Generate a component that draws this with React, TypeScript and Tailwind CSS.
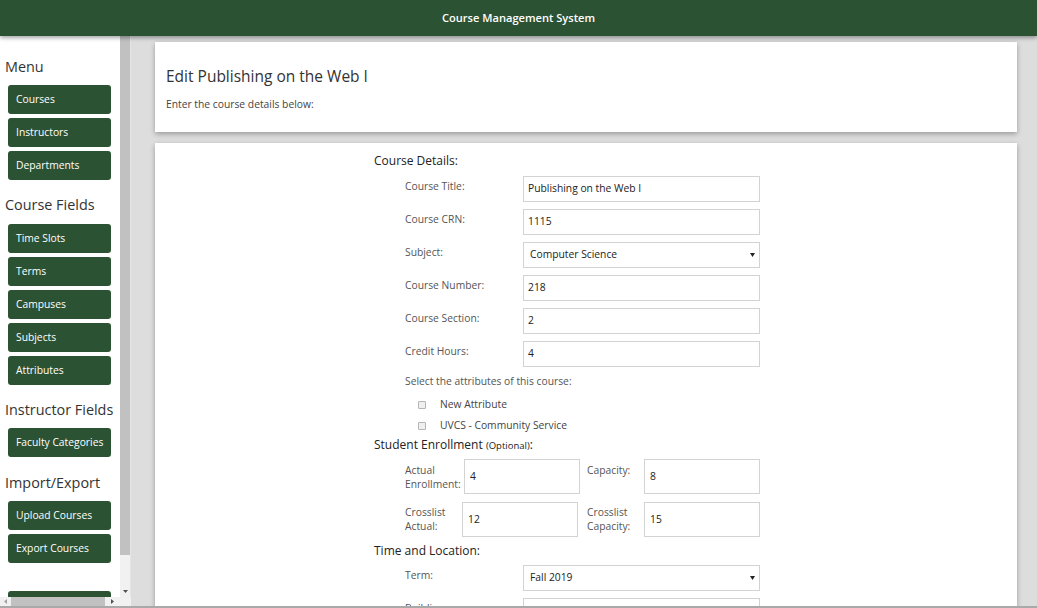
import React from "react";

const GREEN = "bg-[#2c5234]";

function SideButton({ children }: { children?: React.ReactNode }) {
  return (
    <div className={`ml-[8px] w-[103px] h-[29px] ${GREEN} rounded-[3px] text-white text-[10.3px] pl-[8px] flex items-center shrink-0`}>
      {children}
    </div>
  );
}

function SideHeading({ children, className = "" }: { children: React.ReactNode; className?: string }) {
  return (
    <div className={`pl-[5px] h-[20px] leading-[20px] text-[14.4px] text-[#333] whitespace-nowrap shrink-0 ${className}`}>
      {children}
    </div>
  );
}

function Field({ label, value, select = false, className = "" }: { label: string; value: string; select?: boolean; className?: string }) {
  return (
    <div className={`flex items-start pl-[31px] ${className}`}>
      <div className="w-[118px] pt-[3px] leading-[14px] text-[10.3px] text-[#555]">{label}</div>
      <div
        className={`w-[237px] h-[26px] border border-[#d3d3d3] bg-white flex items-center text-[10.3px] text-[#222] ${
          select ? "pl-[6px] pr-[4px] justify-between" : "pl-[4px]"
        }`}
      >
        <span>{value}</span>
        {select && (
          <svg width="5" height="4" viewBox="0 0 5 4">
            <path d="M0 0 L5 0 L2.5 4 Z" fill="#222" />
          </svg>
        )}
      </div>
    </div>
  );
}

function Check({ label, className = "" }: { label: string; className?: string }) {
  return (
    <div className={`flex items-center h-[16px] pl-[44px] ${className}`}>
      <div className="w-[8px] h-[8px] rounded-[1px] border border-[#b5b5b5] bg-[#efefef]" />
      <div className="ml-[14px] text-[10.3px] text-[#444]">{label}</div>
    </div>
  );
}

function SmallField({
  label,
  value,
  labelW,
  pt,
}: {
  label: React.ReactNode;
  value: string;
  labelW: string;
  pt: string;
}) {
  return (
    <div className="flex items-start">
      <div className={`${labelW} ${pt} leading-[14px] text-[10.3px] text-[#555]`}>{label}</div>
      <div className="w-[116px] h-[35px] border border-[#d3d3d3] bg-white flex items-center pl-[5px] text-[10.3px] text-[#222]">
        {value}
      </div>
    </div>
  );
}

export default function App() {
  return (
    <div
      className="w-[1037px] h-[608px] overflow-hidden flex flex-col bg-[#dddddd]"
      style={{ fontFamily: "'Open Sans', 'Noto Sans', sans-serif" }}
    >
      {/* Header */}
      <div className={`h-[36px] shrink-0 ${GREEN} flex items-center justify-center relative z-10 shadow-[0_2px_4px_rgba(0,0,0,0.35)]`}>
        <span className="text-white text-[11.1px] font-semibold">Course Management System</span>
      </div>

      <div className="flex-1 min-h-0 flex">
        {/* Sidebar */}
        <div className="w-[131px] shrink-0 flex flex-col relative z-[5]">
          <div className="flex-1 min-h-0 flex">
            <div className="w-[120px] bg-white overflow-hidden flex flex-col pt-[21px]">
              <SideHeading className="mb-[8px]">Menu</SideHeading>
              <div className="flex flex-col gap-[4px]">
                <SideButton>Courses</SideButton>
                <SideButton>Instructors</SideButton>
                <SideButton>Departments</SideButton>
              </div>
              <SideHeading className="mt-[15px] mb-[9px]">Course Fields</SideHeading>
              <div className="flex flex-col gap-[4px]">
                <SideButton>Time Slots</SideButton>
                <SideButton>Terms</SideButton>
                <SideButton>Campuses</SideButton>
                <SideButton>Subjects</SideButton>
                <SideButton>Attributes</SideButton>
              </div>
              <SideHeading className="mt-[15px] mb-[8px]">Instructor Fields</SideHeading>
              <SideButton>Faculty Categories</SideButton>
              <SideHeading className="mt-[16px] mb-[8px]">Import/Export</SideHeading>
              <div className="flex flex-col gap-[4px]">
                <SideButton>Upload Courses</SideButton>
                <SideButton>Export Courses</SideButton>
              </div>
              <div className="mt-[28px]">
                <SideButton />
              </div>
            </div>
            {/* vertical scrollbar */}
            <div className="w-[11px] bg-[#f1f1f1] flex flex-col border-r border-r-[#e4e4e4]">
              <div className="h-[519px] bg-[#c1c1c1] shrink-0" />
              <div className="flex-1" />
              <div className="h-[12px] flex items-center justify-center">
                <svg width="5" height="3" viewBox="0 0 5 3">
                  <path d="M0 0 L5 0 L2.5 3 Z" fill="#505050" />
                </svg>
              </div>
            </div>
          </div>
          {/* horizontal scrollbar */}
          <div className="h-[9px] flex bg-[#f1f1f1] shrink-0">
            <div className="w-[11px] flex items-center justify-center">
              <svg width="3" height="5" viewBox="0 0 3 5">
                <path d="M3 0 L3 5 L0 2.5 Z" fill="#a3a3a3" />
              </svg>
            </div>
            <div className="w-[94px] bg-[#c1c1c1]" />
            <div className="w-[15px] flex items-center justify-center">
              <svg width="3" height="5" viewBox="0 0 3 5">
                <path d="M0 0 L0 5 L3 2.5 Z" fill="#505050" />
              </svg>
            </div>
            <div className="w-[11px] bg-[#f1f1f1]" />
          </div>
        </div>

        {/* Main */}
        <div className="flex-1 min-w-0 pl-[24px] pr-[20px] pt-[6px] flex flex-col gap-[11px] overflow-hidden">
          <div className="h-[90px] shrink-0 bg-white shadow-[0_2px_5px_rgba(0,0,0,0.3)] pl-[11px] pt-[24px]">
            <div className="text-[15.5px] leading-[20px] text-[#333]">Edit Publishing on the Web I</div>
            <div className="mt-[11px] text-[10.3px] leading-[14px] text-[#444]">Enter the course details below:</div>
          </div>

          <div className="flex-1 bg-white shadow-[0_2px_5px_rgba(0,0,0,0.3)] min-h-[600px]">
            <div className="ml-[219px] w-[386px] pt-[9px] flex flex-col">
              <div className="h-[17px] leading-[17px] text-[12px] text-[#222]">Course Details:</div>
              <div className="mt-[7px] flex flex-col gap-[7px]">
                <Field label="Course Title:" value="Publishing on the Web I" />
                <Field label="Course CRN:" value="1115" />
                <Field label="Subject:" value="Computer Science" select />
                <Field label="Course Number:" value="218" />
                <Field label="Course Section:" value="2" />
                <Field label="Credit Hours:" value="4" />
              </div>
              <div className="mt-[7px] pl-[31px] leading-[14px] text-[10.3px] text-[#555]">
                Select the attributes of this course:
              </div>
              <Check label="New Attribute" className="mt-[9px]" />
              <Check label="UVCS - Community Service" className="mt-[5px]" />
              <div className="mt-[2px] h-[17px] leading-[17px] text-[12px] text-[#222]">
                Student Enrollment <span className="text-[9.5px]">(Optional)</span>:
              </div>
              <div className="mt-[6px] pl-[31px] flex">
                <SmallField label={<>Actual<br />Enrollment:</>} value="4" labelW="w-[59px]" pt="pt-[4px]" />
                <div className="w-[7px]" />
                <SmallField label="Capacity:" value="8" labelW="w-[57px]" pt="pt-[4px]" />
              </div>
              <div className="mt-[8px] pl-[31px] flex">
                <SmallField label={<>Crosslist<br />Actual:</>} value="12" labelW="w-[57px]" pt="pt-[3px]" />
                <div className="w-[9px]" />
                <SmallField label={<>Crosslist<br />Capacity:</>} value="15" labelW="w-[57px]" pt="pt-[3px]" />
              </div>
              <div className="mt-[5px] h-[17px] leading-[17px] text-[12px] text-[#222]">Time and Location:</div>
              <div className="mt-[6px] flex flex-col gap-[7px]">
                <Field label="Term:" value="Fall 2019" select />
                <Field label="Building:" value="" />
              </div>
            </div>
          </div>
        </div>
      </div>
      <div className="h-[2px] shrink-0 bg-[#a9a9a9]" />
    </div>
  );
}
